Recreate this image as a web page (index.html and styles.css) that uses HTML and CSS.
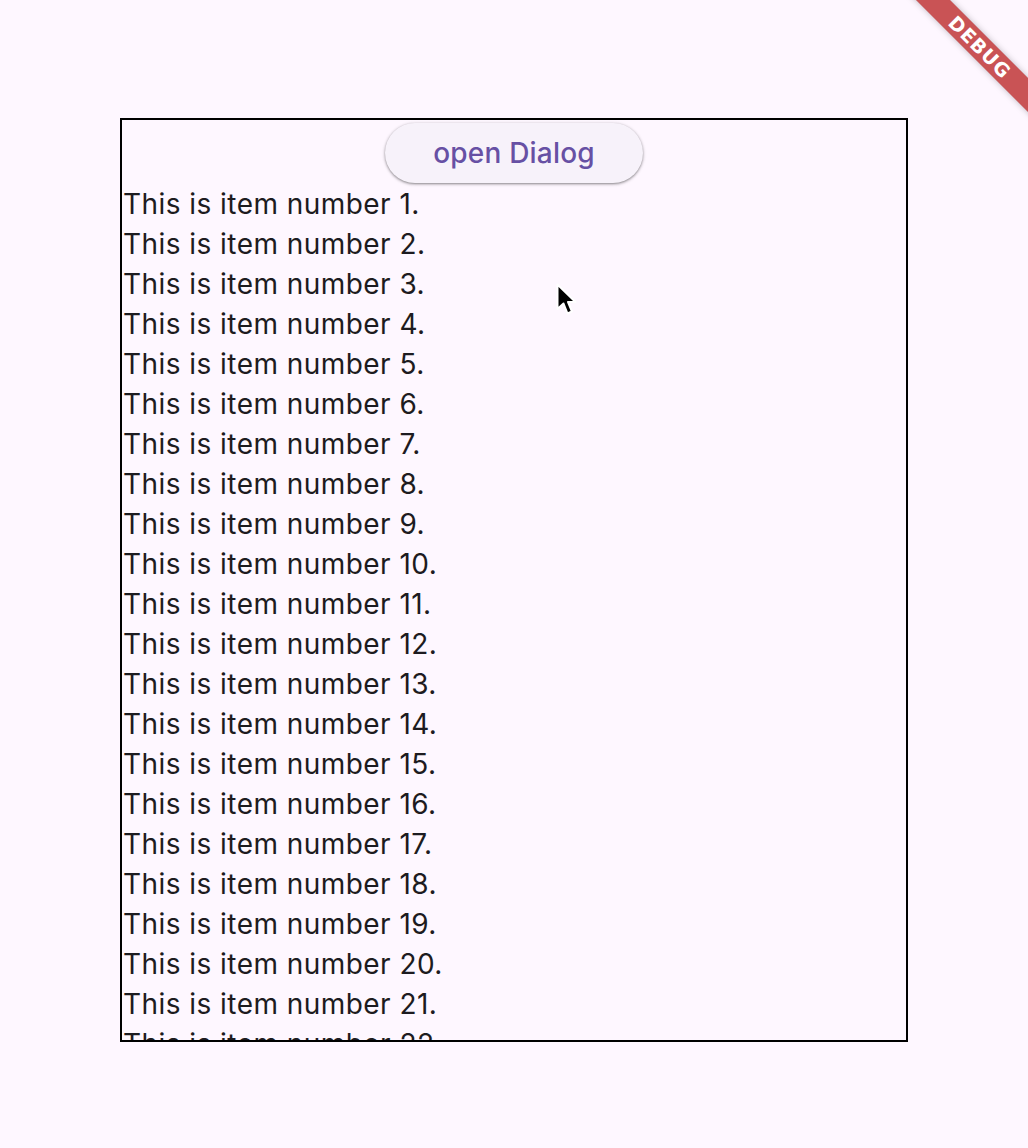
FILE: index.html
```html
<!DOCTYPE html>
<html>
<head>
<meta charset="utf-8">
<link rel="stylesheet" href="styles.css">
</head>
<body>
<div class="page">
  <div class="frame">
    <div class="btn-row"><button class="btn">open Dialog</button></div>
    <div class="list">
      <div class="item">This is item number 1.</div>
      <div class="item">This is item number 2.</div>
      <div class="item">This is item number 3.</div>
      <div class="item">This is item number 4.</div>
      <div class="item">This is item number 5.</div>
      <div class="item">This is item number 6.</div>
      <div class="item">This is item number 7.</div>
      <div class="item">This is item number 8.</div>
      <div class="item">This is item number 9.</div>
      <div class="item">This is item number 10.</div>
      <div class="item">This is item number 11.</div>
      <div class="item">This is item number 12.</div>
      <div class="item">This is item number 13.</div>
      <div class="item">This is item number 14.</div>
      <div class="item">This is item number 15.</div>
      <div class="item">This is item number 16.</div>
      <div class="item">This is item number 17.</div>
      <div class="item">This is item number 18.</div>
      <div class="item">This is item number 19.</div>
      <div class="item">This is item number 20.</div>
      <div class="item">This is item number 21.</div>
      <div class="item">This is item number 22.</div>
    </div>
  </div>
</div>
<div class="banner">DEBUG</div>
<svg class="cursor" width="22" height="34" viewBox="0 0 22 34">
  <path d="M1.5 1.5 L1.5 26 L7.5 20.5 L11.5 30.5 L16 28.5 L12 19 L19.5 19 Z" fill="#000" stroke="#fff" stroke-width="2" stroke-linejoin="round"/>
</svg>
</body>
</html>
```

FILE: styles.css
```css
html, body {
  margin: 0;
  padding: 0;
  background: #fef7ff;
  height: 100%;
  overflow: hidden;
}
.page {
  padding: 118px 0 0 120px;
}
.frame {
  width: 784px;
  height: 920px;
  border: 2px solid #000;
  overflow: hidden;
  display: flex;
  flex-direction: column;
}
.btn-row {
  height: 64px;
  flex: none;
  display: flex;
  justify-content: center;
  align-items: center;
}
.btn {
  width: 258px;
  height: 60px;
  border: none;
  border-radius: 30px;
  background: #f7f2fa;
  color: #6750a4;
  font-family: Inter, "Noto Sans", sans-serif;
  font-weight: 500;
  font-size: 28px;
  letter-spacing: 0.2px;
  box-shadow: 0 1px 2px rgba(0,0,0,0.3), 0 1px 3px 1px rgba(0,0,0,0.15);
  padding: 0;
  margin-top: 1px;
}
.list {
  display: flex;
  flex-direction: column;
}
.item {
  height: 40px;
  flex: none;
  line-height: 40px;
  font-family: Inter, "Noto Sans", sans-serif;
  font-size: 28px;
  letter-spacing: 0.45px;
  color: #1d1b20;
  padding-left: 1px;
  white-space: nowrap;
}
.banner {
  position: absolute;
  left: 860px;
  top: 35px;
  width: 240px;
  height: 24px;
  line-height: 24px;
  text-align: center;
  transform: rotate(45deg);
  background: rgba(183, 28, 28, 0.75);
  color: #fff;
  font-family: "DejaVu Sans", sans-serif;
  font-weight: 900;
  font-size: 19px;
  letter-spacing: 1px;
  box-shadow: 0 0 6px rgba(0,0,0,0.25);
}
.cursor {
  position: absolute;
  left: 556px;
  top: 283px;
}
```
